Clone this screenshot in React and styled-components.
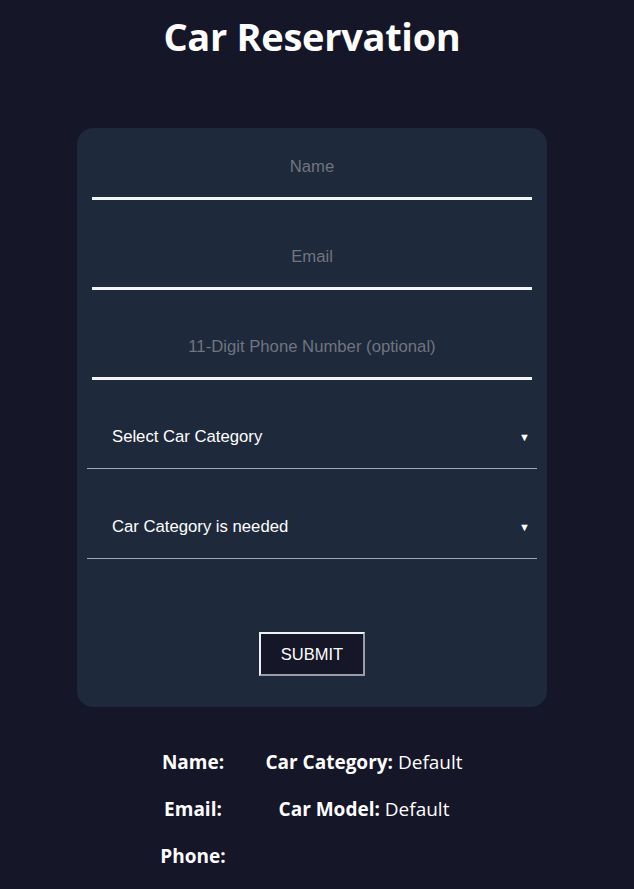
import React, { useState } from "react";
import styled, { createGlobalStyle } from "styled-components";

const GlobalStyle = createGlobalStyle`
  html, body {
    margin: 0;
    padding: 0;
    background: #151628;
  }
  body {
    font-family: "Open Sans", "Noto Sans", sans-serif;
    color: #ffffff;
  }
`;

const Page = styled.div`
  min-height: 889px;
  display: flex;
  flex-direction: column;
  align-items: center;
  padding-top: 12px;
  box-sizing: border-box;
`;

const Title = styled.h1`
  margin: 0 10px 0 0;
  font-size: 38px;
  font-weight: 700;
  line-height: 48px;
  letter-spacing: -0.3px;
`;

const Card = styled.form`
  margin: 68px 10px 0 0;
  width: 470px;
  box-sizing: border-box;
  background: #1e293b;
  border-radius: 16px;
  padding: 12px 15px 31px;
  display: flex;
  flex-direction: column;
`;

const Input = styled.input`
  width: 100%;
  height: 60px;
  box-sizing: border-box;
  background: transparent;
  border: none;
  border-bottom: 3px solid #f3f4f6;
  padding: 0 0 4px;
  margin-bottom: 30px;
  color: #fff;
  font-family: "Liberation Sans", Arial, sans-serif;
  font-size: 16.7px;
  text-align: center;
  outline: none;

  &::placeholder {
    color: #70757f;
  }
`;

const SelectRow = styled.div`
  margin: ${(p) => (p.$last ? "0 -5px 73px" : "-1px -5px 30px")};
  height: 60px;
  box-sizing: border-box;
  border-bottom: 1px solid #a3aab5;
  display: flex;
  align-items: center;
  justify-content: space-between;
  padding: 0 7px 3px 25px;
  font-family: "Liberation Sans", Arial, sans-serif;
  font-size: 16.7px;
  color: #fff;
`;

const Caret = styled.span`
  font-size: 11px;
  line-height: 1;
`;

const SubmitButton = styled.button`
  align-self: center;
  width: 106px;
  height: 44px;
  background: #151628;
  color: #fff;
  font-family: "Liberation Sans", Arial, sans-serif;
  font-size: 16.5px;
  border-style: solid;
  border-width: 2px;
  border-color: #eef0f4 #9a9ea6 #9a9ea6 #eef0f4;
  padding: 0;
  cursor: pointer;
`;

const Summary = styled.div`
  margin-top: 42px;
  display: grid;
  grid-template-columns: 94px 248px;
  row-gap: 20px;
  font-size: 19px;
  line-height: 27px;
  text-align: center;
`;

const Item = styled.div`
  white-space: nowrap;
`;

const Label = styled.b`
  font-weight: 700;
`;

export default function App() {
  const [form, setForm] = useState({ name: "", email: "", phone: "" });
  const update = (key) => (e) => setForm({ ...form, [key]: e.target.value });

  return (
    <>
      <GlobalStyle />
      <Page>
        <Title>Car Reservation</Title>
        <Card onSubmit={(e) => e.preventDefault()}>
          <Input placeholder="Name" value={form.name} onChange={update("name")} />
          <Input placeholder="Email" value={form.email} onChange={update("email")} />
          <Input
            placeholder="11-Digit Phone Number (optional)"
            value={form.phone}
            onChange={update("phone")}
          />
          <SelectRow>
            <span>Select Car Category</span>
            <Caret>▼</Caret>
          </SelectRow>
          <SelectRow $last>
            <span>Car Category is needed</span>
            <Caret>▼</Caret>
          </SelectRow>
          <SubmitButton type="submit">SUBMIT</SubmitButton>
        </Card>
        <Summary>
          <Item>
            <Label>Name:</Label> {form.name}
          </Item>
          <Item>
            <Label>Car Category:</Label> Default
          </Item>
          <Item>
            <Label>Email:</Label> {form.email}
          </Item>
          <Item>
            <Label>Car Model:</Label> Default
          </Item>
          <Item>
            <Label>Phone:</Label> {form.phone}
          </Item>
        </Summary>
      </Page>
    </>
  );
}
